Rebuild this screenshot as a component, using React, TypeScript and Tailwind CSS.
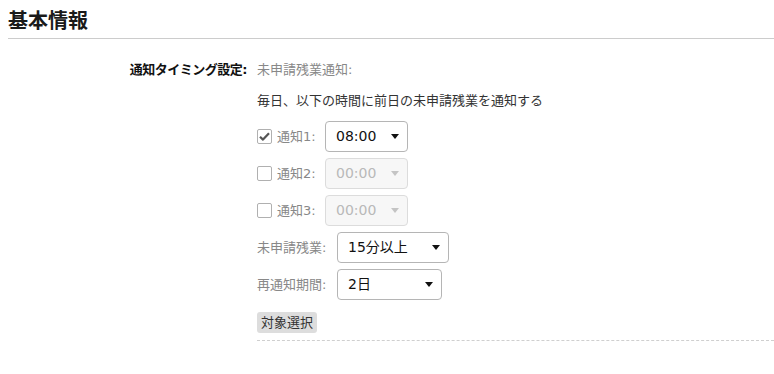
import React from 'react'

const font = { fontFamily: '"DejaVu Sans", "Noto Sans CJK JP", sans-serif' }

function Arrow({ disabled }: { disabled?: boolean }) {
  return (
    <svg
      className="absolute right-[9px] top-[13px] pointer-events-none"
      width="8"
      height="5"
      viewBox="0 0 8 5"
    >
      <path d="M0 0 L8 0 L4 5 Z" fill={disabled ? '#c4c4c4' : '#111'} />
    </svg>
  )
}

function FakeSelect({
  value,
  width,
  disabled,
}: {
  value: string
  width: string
  disabled?: boolean
}) {
  return (
    <div className={`relative h-[31px] ${width}`}>
      <div
        className={
          disabled
            ? 'h-full w-full rounded-[4px] border border-[#dcdcdc] bg-[#f7f7f7] pl-[10px] text-[14px] leading-[29px] text-[#b9b9b9]'
            : 'h-full w-full rounded-[4px] border border-[#b5b5b5] bg-white pl-[10px] text-[14px] leading-[29px] text-[#111]'
        }
      >
        {value}
      </div>
      <Arrow disabled={disabled} />
    </div>
  )
}

function Checkbox({ checked }: { checked?: boolean }) {
  return (
    <div className="w-[15px] h-[15px] shrink-0 rounded-[2px] border border-[#b0b0b0] bg-white flex items-center justify-center">
      {checked && (
        <svg width="11" height="9" viewBox="0 0 11 9">
          <path
            d="M1 4.8 L4 7.6 L10 1.2"
            fill="none"
            stroke="#555"
            strokeWidth="2.2"
            strokeLinejoin="round"
          />
        </svg>
      )}
    </div>
  )
}

const notices = [
  { label: '通知1:', value: '08:00', checked: true },
  { label: '通知2:', value: '00:00', checked: false },
  { label: '通知3:', value: '00:00', checked: false },
]

export default function App() {
  return (
    <div className="w-[774px] h-[374px] bg-white text-[#222]" style={font}>
      <div className="pl-2">
        <h2 className="pt-[8px] pb-[3px] text-[20px] leading-[27px] font-bold text-[#1a1a1a] border-b border-[#cccccc]">
          基本情報
        </h2>
      </div>

      <div className="flex mt-[21px]">
        <div className="w-[247px] text-right text-[13px] leading-[20px] font-bold tracking-[-0.5px] text-[#111]">
          通知タイミング設定:
        </div>
        <div className="ml-[10px] flex-1 flex flex-col">
          <div className="text-[13px] leading-[20px] text-[#888]">未申請残業通知:</div>
          <div className="mt-[11px] text-[13px] leading-[20px] text-[#333]">
            毎日、以下の時間に前日の未申請残業を通知する
          </div>

          <div className="mt-[10px] flex flex-col gap-[6px]">
            {notices.map((n) => (
              <div key={n.label} className="flex items-center h-[31px]">
                <Checkbox checked={n.checked} />
                <span className="ml-[5px] w-[48px] shrink-0 text-[13px] text-[#888]">{n.label}</span>
                <FakeSelect value={n.value} width="w-[83px]" disabled={!n.checked} />
              </div>
            ))}
            <div className="flex items-center h-[31px]">
              <span className="w-[80px] shrink-0 text-[13px] text-[#888]">未申請残業:</span>
              <FakeSelect value="15分以上" width="w-[112px]" />
            </div>
            <div className="flex items-center h-[31px]">
              <span className="w-[80px] shrink-0 text-[13px] text-[#888]">再通知期間:</span>
              <FakeSelect value="2日" width="w-[105px]" />
            </div>
          </div>

          <div className="mt-[12px] flex">
            <button className="h-[21px] px-[4px] rounded-[3px] bg-[#dddddd] text-[13px] leading-[21px] text-[#333]">
              対象選択
            </button>
          </div>
          <div className="mt-[7px] border-t border-dashed border-[#cfcfcf]" />
        </div>
      </div>
    </div>
  )
}
